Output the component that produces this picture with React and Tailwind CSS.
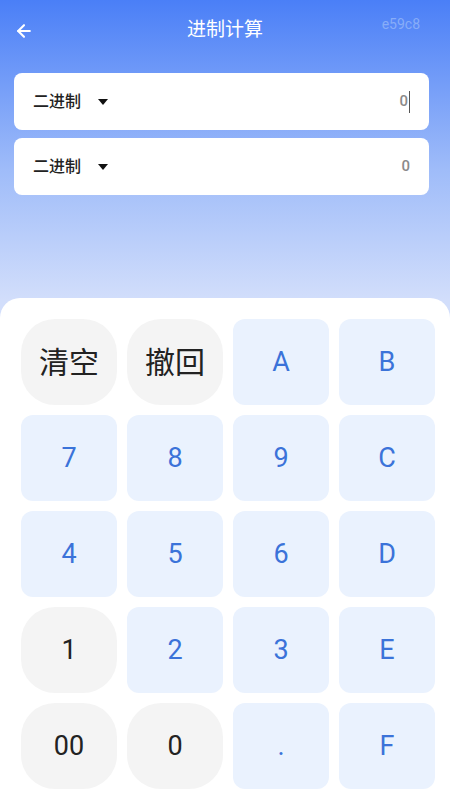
import { ArrowLeft } from "lucide-react";

const keys = [
  { label: "清空", kind: "gray", big: true },
  { label: "撤回", kind: "gray", big: true },
  { label: "A", kind: "blue" },
  { label: "B", kind: "blue" },
  { label: "7", kind: "blue" },
  { label: "8", kind: "blue" },
  { label: "9", kind: "blue" },
  { label: "C", kind: "blue" },
  { label: "4", kind: "blue" },
  { label: "5", kind: "blue" },
  { label: "6", kind: "blue" },
  { label: "D", kind: "blue" },
  { label: "1", kind: "gray" },
  { label: "2", kind: "blue" },
  { label: "3", kind: "blue" },
  { label: "E", kind: "blue" },
  { label: "00", kind: "gray" },
  { label: "0", kind: "gray" },
  { label: ".", kind: "blue" },
  { label: "F", kind: "blue" },
];

const font = { fontFamily: 'Roboto, "Noto Sans CJK SC", sans-serif' };

const BaseRow = ({ cursor }) => (
  <div className="flex h-[57px] items-center justify-between rounded-lg bg-white pl-[19px] pr-[19px]">
    <div className="flex items-center gap-[17px]">
      <span className="text-[16px] font-medium text-[#222]">二进制</span>
      <span className="h-0 w-0 border-x-[5px] border-t-[6px] border-x-transparent border-t-[#111]" />
    </div>
    <div className="flex items-center text-[15px] font-medium text-[#8a8a8a]">
      0{cursor && <span className="ml-[1px] h-[22px] w-px bg-[#555]" />}
    </div>
  </div>
);

export default function App() {
  return (
    <div
      style={font}
      className="relative flex h-[800px] w-[450px] flex-col overflow-hidden bg-[linear-gradient(to_bottom,#4a7ff7_0px,#9fbcf9_170px,#d2defb_300px,#d2defb_100%)]"
    >
      <header className="relative flex h-[60px] items-center justify-center">
        <ArrowLeft className="absolute left-[14px] top-[21px] h-[20px] w-[20px] text-white" strokeWidth={2.5} />
        <h1 className="text-[19px] text-white">进制计算</h1>
        <span className="absolute right-[30px] top-[14px] text-[14px] text-[#88adf8]">e59c8</span>
      </header>

      <div className="mx-[14px] mt-[13px] flex flex-col gap-[8px] pr-[7px]">
        <BaseRow cursor />
        <BaseRow />
      </div>

      <div className="mt-[103px] flex-1 rounded-t-[20px] bg-white pl-[21px] pr-[15px] pt-[21px]">
        <div className="grid grid-cols-4 gap-[10px]">
          {keys.map((k) => (
            <button
              key={k.label}
              className={
                k.kind === "gray"
                  ? "flex h-[86px] items-center justify-center rounded-[34px] bg-[#f4f4f4] text-[#222]"
                  : "flex h-[86px] items-center justify-center rounded-[12px] bg-[#eaf2fe] text-[#3b73d9]"
              }
            >
              <span className={k.big ? "text-[30px]" : "text-[27px]"}>{k.label}</span>
            </button>
          ))}
        </div>
      </div>
    </div>
  );
}
